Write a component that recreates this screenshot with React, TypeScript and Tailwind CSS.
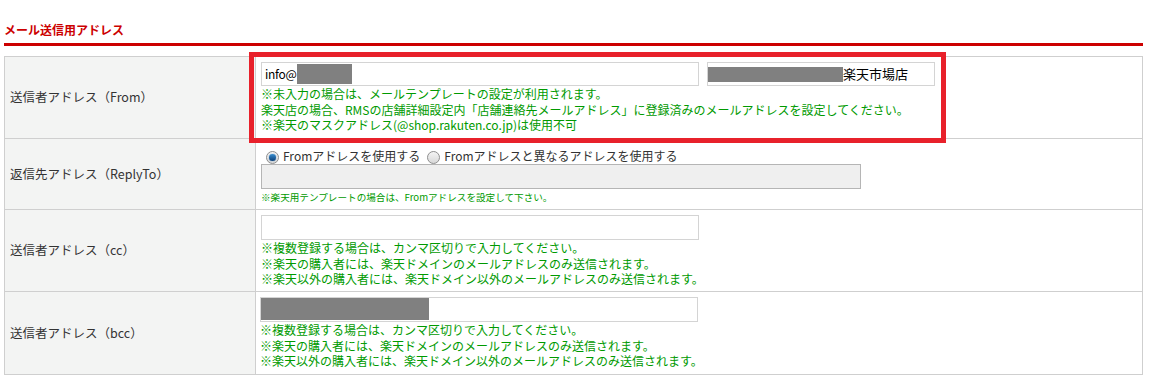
import React from "react";

const jp = { fontFamily: '"Noto Sans CJK JP", "Noto Sans", sans-serif' };

function Radio({ checked }: { checked?: boolean }) {
  return (
    <span className="inline-flex h-[13px] w-[13px] items-center justify-center rounded-full border border-[#8f8f8f] bg-gradient-to-b from-[#f4f4f4] to-[#d8d8d8] align-middle">
      {checked && (
        <span className="h-[7px] w-[7px] rounded-full bg-gradient-to-b from-[#3a8fd0] to-[#0c3f78] shadow-[0_0_1px_#1b6fb8]" />
      )}
    </span>
  );
}

function Notes({ lines }: { lines: string[] }) {
  return (
    <div className="text-[12px] leading-[15.5px] text-[#009a00]">
      {lines.map((l, i) => (
        <div key={i}>{l}</div>
      ))}
    </div>
  );
}

const ccNotes = [
  "※複数登録する場合は、カンマ区切りで入力してください。",
  "※楽天の購入者には、楽天ドメインのメールアドレスのみ送信されます。",
  "※楽天以外の購入者には、楽天ドメイン以外のメールアドレスのみ送信されます。",
];

export default function App() {
  return (
    <div className="relative h-[385px] w-[1160px] bg-white text-[#333]" style={jp}>
      {/* section title */}
      <div className="px-1 pt-[21px]">
        <h2 className="h-[19px] text-[12px] font-bold leading-[18px] text-[#cc0000]">
          メール送信用アドレス
        </h2>
        <div className="mt-[3px] h-[3px] w-[1139px] bg-[#cc0000]" />
      </div>

      <table className="ml-1 mt-[10px] w-[1139px] border-collapse text-[12.5px]">
        <tbody>
          {/* From */}
          <tr className="h-[82px]">
            <th className="w-[251px] border border-[#cfcfcf] bg-[#f3f4f3] pl-[5px] text-left font-normal">
              送信者アドレス（From）
            </th>
            <td className="border border-[#cfcfcf] pl-[5px] pb-[5px] pt-[5px] align-top">
              <div className="flex gap-2">
                <div className="flex h-[24px] w-[438px] items-center border border-[#d4d4d4] pl-[3px] text-[12px] tracking-[-0.3px] text-black">
                  info@
                  <span className="h-[20px] w-[55px] bg-[#808080]" />
                </div>
                <div className="flex h-[24px] w-[228px] items-center border border-[#d4d4d4] text-[13px] text-black">
                  <span className="h-[15px] w-[135px] bg-[#808080]" />
                  楽天市場店
                </div>
              </div>
              <Notes
                lines={[
                  "※未入力の場合は、メールテンプレートの設定が利用されます。",
                  "楽天店の場合、RMSの店舗詳細設定内「店舗連絡先メールアドレス」に登録済みのメールアドレスを設定してください。",
                  "※楽天のマスクアドレス(@shop.rakuten.co.jp)は使用不可",
                ]}
              />
            </td>
          </tr>

          {/* ReplyTo */}
          <tr className="h-[71px]">
            <th className="border border-[#cfcfcf] bg-[#f3f4f3] pl-[5px] text-left font-normal">
              返信先アドレス（ReplyTo）
            </th>
            <td className="border border-[#cfcfcf] pl-[5px] pt-[8px] align-top">
              <div className="flex h-[17px] items-center text-[12px]">
                <span className="ml-[5px]">
                  <Radio checked />
                </span>
                <span className="ml-[4px]">Fromアドレスを使用する</span>
                <span className="ml-[7px]">
                  <Radio />
                </span>
                <span className="ml-[4px]">Fromアドレスと異なるアドレスを使用する</span>
              </div>
              <div className="h-[25px] w-[600px] border border-[#b5b5b5] bg-[#efefef]" />
              <div className="mt-[1px] text-[9.6px] leading-[14px] text-[#009a00]">
                ※楽天用テンプレートの場合は、Fromアドレスを設定して下さい。
              </div>
            </td>
          </tr>

          {/* cc */}
          <tr className="h-[82px]">
            <th className="border border-[#cfcfcf] bg-[#f3f4f3] pl-[5px] text-left font-normal">
              送信者アドレス（cc）
            </th>
            <td className="border border-[#cfcfcf] pl-[5px] pt-[5px] align-top">
              <div className="h-[25px] w-[438px] border border-[#d4d4d4]" />
              <Notes lines={ccNotes} />
            </td>
          </tr>

          {/* bcc */}
          <tr className="h-[83px]">
            <th className="border border-[#cfcfcf] bg-[#f3f4f3] pl-[5px] text-left font-normal">
              送信者アドレス（bcc）
            </th>
            <td className="border border-[#cfcfcf] pl-[4px] pt-[5px] align-top">
              <div className="h-[25px] w-[438px] border border-[#d4d4d4]">
                <div className="h-[22px] w-[168px] bg-[#808080]" />
              </div>
              <Notes lines={ccNotes} />
            </td>
          </tr>
        </tbody>
      </table>

      {/* annotation box */}
      <div className="absolute left-[249px] top-[52px] h-[91px] w-[697px] border-[5px] border-[#e8212b]" />
    </div>
  );
}
